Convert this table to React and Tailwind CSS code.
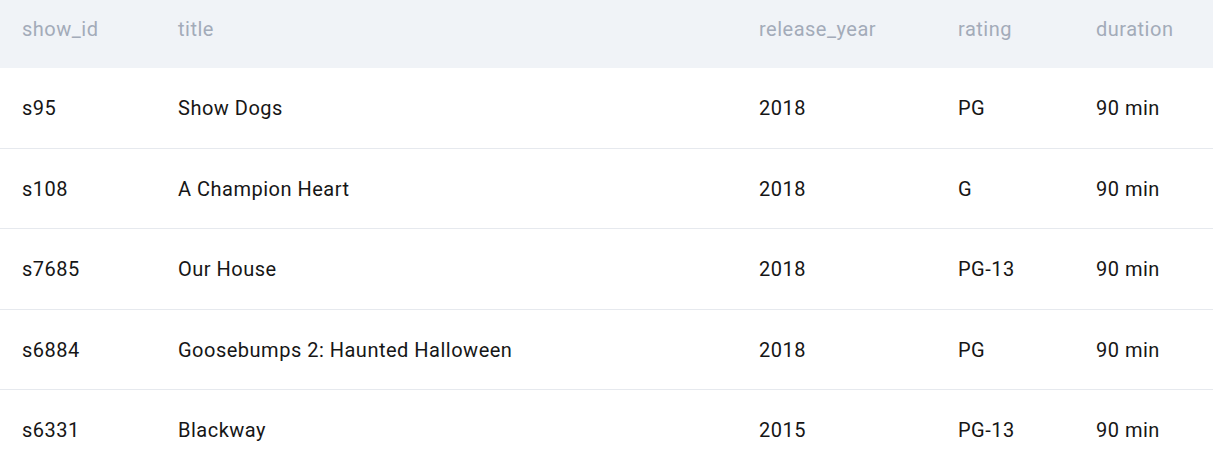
import React from "react";

const rows = [
  { id: "s95", title: "Show Dogs", year: "2018", rating: "PG", duration: "90 min", h: "h-[80px]" },
  { id: "s108", title: "A Champion Heart", year: "2018", rating: "G", duration: "90 min", h: "h-[80px]" },
  { id: "s7685", title: "Our House", year: "2018", rating: "PG-13", duration: "90 min", h: "h-[81px]" },
  { id: "s6884", title: "Goosebumps 2: Haunted Halloween", year: "2018", rating: "PG", duration: "90 min", h: "h-[80px]" },
  { id: "s6331", title: "Blackway", year: "2015", rating: "PG-13", duration: "90 min", h: "h-[81px]" },
];

const cols = "grid grid-cols-[156px_581px_199px_138px_1fr]";

export default function App() {
  return (
    <div className="w-[1213px] h-[460px] bg-white overflow-hidden font-['Roboto',sans-serif] tracking-[0.5px]">
      {/* header */}
      <div className={`${cols} h-[68px] bg-[#f0f3f7] pl-[22px] pt-[15px] text-[20px] leading-[28px] text-[#a3abb9]`}>
        <div>show_id</div>
        <div>title</div>
        <div>release_year</div>
        <div>rating</div>
        <div>duration</div>
      </div>

      {/* body */}
      {rows.map((r, i) => (
        <div
          key={r.id}
          className={`${cols} ${r.h} items-center pl-[22px] text-[20px] text-[#161616] ${
            i > 0 ? "border-t border-[#e6e9ee]" : ""
          }`}
        >
          <div>{r.id}</div>
          <div>{r.title}</div>
          <div>{r.year}</div>
          <div>{r.rating}</div>
          <div>{r.duration}</div>
        </div>
      ))}
    </div>
  );
}
